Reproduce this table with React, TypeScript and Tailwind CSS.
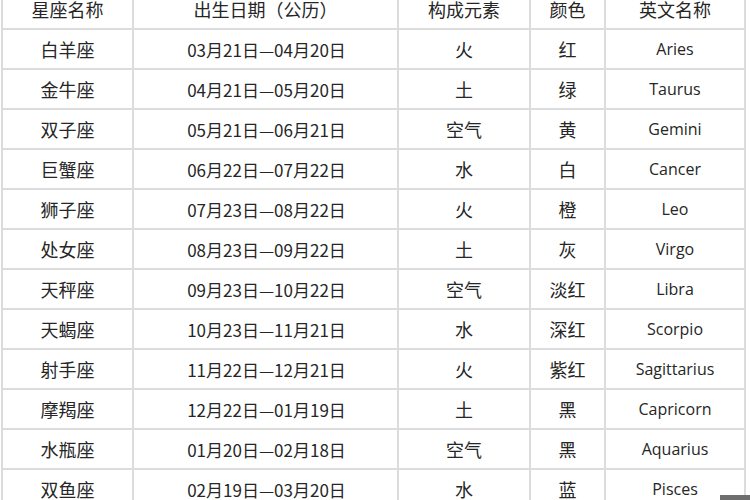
import React from "react";

const rows: [string, string, string, string, string][] = [
  ["白羊座", "03月21日—04月20日", "火", "红", "Aries"],
  ["金牛座", "04月21日—05月20日", "土", "绿", "Taurus"],
  ["双子座", "05月21日—06月21日", "空气", "黄", "Gemini"],
  ["巨蟹座", "06月22日—07月22日", "水", "白", "Cancer"],
  ["狮子座", "07月23日—08月22日", "火", "橙", "Leo"],
  ["处女座", "08月23日—09月22日", "土", "灰", "Virgo"],
  ["天秤座", "09月23日—10月22日", "空气", "淡红", "Libra"],
  ["天蝎座", "10月23日—11月21日", "水", "深红", "Scorpio"],
  ["射手座", "11月22日—12月21日", "火", "紫红", "Sagittarius"],
  ["摩羯座", "12月22日—01月19日", "土", "黑", "Capricorn"],
  ["水瓶座", "01月20日—02月18日", "空气", "黑", "Aquarius"],
  ["双鱼座", "02月19日—03月20日", "水", "蓝", "Pisces"],
];

const cjk = { fontFamily: '"Noto Sans CJK SC", "Noto Sans", sans-serif' };
const latin = { fontFamily: '"Open Sans", "Noto Sans CJK SC", sans-serif' };

export default function App() {
  return (
    <div className="relative w-[750px] h-[500px] overflow-hidden bg-white">
      <div className="-mt-[12px] pl-[1px]">
        <table className="border-collapse text-[#262626]" style={cjk}>
          <colgroup>
            <col className="w-[131px]" />
            <col className="w-[265px]" />
            <col className="w-[132px]" />
            <col className="w-[75px]" />
            <col className="w-[140px]" />
          </colgroup>
          <tbody>
            <tr className="h-[40px]">
              {["星座名称", "出生日期（公历）", "构成元素", "颜色", "英文名称"].map((h) => (
                <td key={h} className="border-2 border-[#dcdcdc] text-center text-[18px] leading-none p-0">
                  {h}
                </td>
              ))}
            </tr>
            {rows.map((r) => (
              <tr key={r[0]} className="h-[40px]">
                <td className="border-2 border-[#dcdcdc] text-center text-[18px] leading-none p-0">{r[0]}</td>
                <td className="border-2 border-[#dcdcdc] text-center text-[17px] leading-none p-0 pl-[2px]">{r[1]}</td>
                <td className="border-2 border-[#dcdcdc] text-center text-[18px] leading-none p-0">{r[2]}</td>
                <td className="border-2 border-[#dcdcdc] text-center text-[18px] leading-none p-0">{r[3]}</td>
                <td className="border-2 border-[#dcdcdc] text-center text-[16px] leading-none p-0" style={latin}>
                  {r[4]}
                </td>
              </tr>
            ))}
          </tbody>
        </table>
      </div>
      <div className="absolute right-0 bottom-0 w-[30px] h-[5px] bg-[#6e6e6e]" />
    </div>
  );
}
